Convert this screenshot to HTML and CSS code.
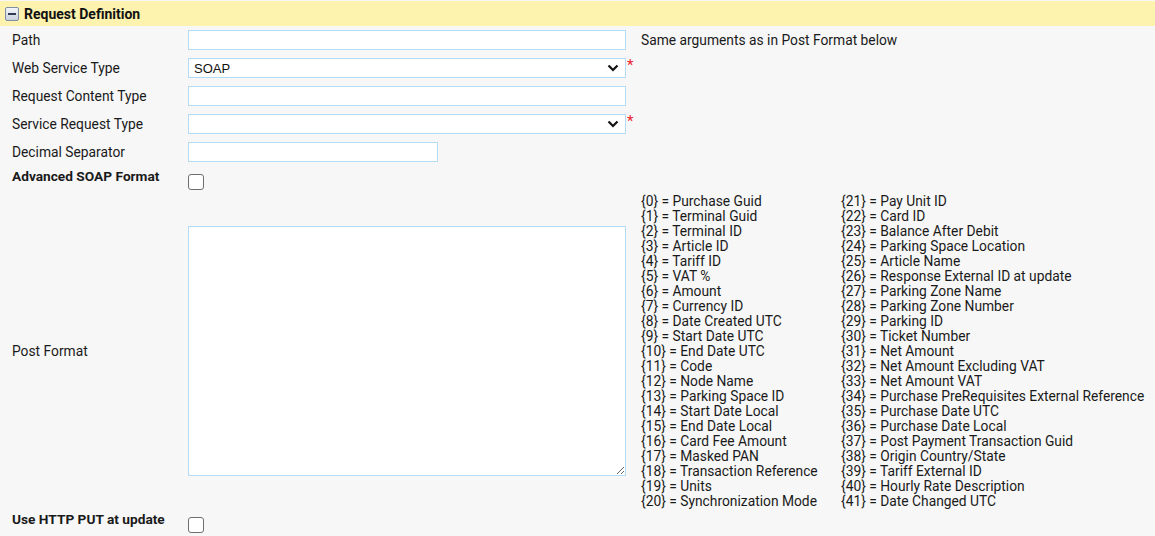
FILE: index.html
```html
<!DOCTYPE html>
<html lang="en">

<head>
  <meta charset="UTF-8" />
  <title>Request Definition</title>
  <link rel="stylesheet" href="styles.css">
</head>

<body>
  <div class="section-head">
    <span class="toggle"><span class="toggle-bar"></span></span>
    <span class="section-title">Request Definition</span>
  </div>

  <div class="form">
    <div class="lbl">Path</div>
    <div class="fld"><input type="text" class="txt" /></div>
    <div class="hint">Same arguments as in Post Format below</div>

    <div class="lbl">Web Service Type</div>
    <div class="fld">
      <span class="sel-wrap">
        <select class="sel">
          <option>SOAP</option>
        </select>
        <svg class="sel-arrow" width="12" height="8" viewBox="0 0 12 8">
          <path d="M1.5 1.5 L6 6 L10.5 1.5" fill="none" stroke="#111" stroke-width="2.2" />
        </svg>
      </span><span class="req">*</span>
    </div>
    <div></div>

    <div class="lbl">Request Content Type</div>
    <div class="fld"><input type="text" class="txt" /></div>
    <div></div>

    <div class="lbl">Service Request Type</div>
    <div class="fld">
      <span class="sel-wrap">
        <select class="sel">
          <option></option>
        </select>
        <svg class="sel-arrow" width="12" height="8" viewBox="0 0 12 8">
          <path d="M1.5 1.5 L6 6 L10.5 1.5" fill="none" stroke="#111" stroke-width="2.2" />
        </svg>
      </span><span class="req">*</span>
    </div>
    <div></div>

    <div class="lbl">Decimal Separator</div>
    <div class="fld"><input type="text" class="txt short" /></div>
    <div></div>

    <div class="lbl bold top">Advanced SOAP Format</div>
    <div class="fld chk-cell"><input type="checkbox" class="chk" /></div>
    <div></div>

    <div class="lbl">Post Format</div>
    <div class="fld area-cell"><textarea class="area"></textarea></div>
    <div class="legend">
      <div class="legend-col">
        <div>{0} = Purchase Guid</div>
        <div>{1} = Terminal Guid</div>
        <div>{2} = Terminal ID</div>
        <div>{3} = Article ID</div>
        <div>{4} = Tariff ID</div>
        <div>{5} = VAT %</div>
        <div>{6} = Amount</div>
        <div>{7} = Currency ID</div>
        <div>{8} = Date Created UTC</div>
        <div>{9} = Start Date UTC</div>
        <div>{10} = End Date UTC</div>
        <div>{11} = Code</div>
        <div>{12} = Node Name</div>
        <div>{13} = Parking Space ID</div>
        <div>{14} = Start Date Local</div>
        <div>{15} = End Date Local</div>
        <div>{16} = Card Fee Amount</div>
        <div>{17} = Masked PAN</div>
        <div>{18} = Transaction Reference</div>
        <div>{19} = Units</div>
        <div>{20} = Synchronization Mode</div>
      </div>
      <div class="legend-col">
        <div>{21} = Pay Unit ID</div>
        <div>{22} = Card ID</div>
        <div>{23} = Balance After Debit</div>
        <div>{24} = Parking Space Location</div>
        <div>{25} = Article Name</div>
        <div>{26} = Response External ID at update</div>
        <div>{27} = Parking Zone Name</div>
        <div>{28} = Parking Zone Number</div>
        <div>{29} = Parking ID</div>
        <div>{30} = Ticket Number</div>
        <div>{31} = Net Amount</div>
        <div>{32} = Net Amount Excluding VAT</div>
        <div>{33} = Net Amount VAT</div>
        <div>{34} = Purchase PreRequisites External Reference</div>
        <div>{35} = Purchase Date UTC</div>
        <div>{36} = Purchase Date Local</div>
        <div>{37} = Post Payment Transaction Guid</div>
        <div>{38} = Origin Country/State</div>
        <div>{39} = Tariff External ID</div>
        <div>{40} = Hourly Rate Description</div>
        <div>{41} = Date Changed UTC</div>
      </div>
    </div>

    <div class="lbl bold top">Use HTTP PUT at update</div>
    <div class="fld chk-cell"><input type="checkbox" class="chk" /></div>
    <div></div>
  </div>
</body>

</html>
```

FILE: styles.css
```css
* {
  margin: 0;
  padding: 0;
  box-sizing: border-box;
}

html,
body {
  width: 100%;
  height: 100%;
}

body {
  background: #f7f7f7;
  font-family: Roboto, "Liberation Sans", sans-serif;
  font-size: 13.8px;
  color: #1a1a1a;
  overflow: hidden;
  padding-top: 1px;
}

.section-head {
  display: flex;
  align-items: center;
  height: 25px;
  background: #fdf2ae;
  padding-left: 5px;
  padding-top: 1px;
}

.toggle {
  display: flex;
  align-items: center;
  justify-content: center;
  width: 14px;
  height: 14px;
  border: 1px solid #7f8ea5;
  border-radius: 2px;
  background: linear-gradient(#f4f6fa, #c9d1de);
  margin-right: 5px;
}

.toggle-bar {
  width: 8px;
  height: 2px;
  background: #2f3b52;
}

.section-title {
  font-weight: bold;
  font-size: 14px;
  color: #111;
}

.form {
  display: grid;
  grid-template-columns: 188px 453px 1fr;
  grid-auto-rows: minmax(28px, auto);
}

.lbl {
  padding-left: 12px;
  padding-bottom: 1px;
  display: flex;
  align-items: center;
}

.lbl.bold {
  font-weight: bold;
  font-size: 13.7px;
}

.lbl.top {
  align-items: flex-start;
  padding-top: 2px;
}

.fld {
  display: flex;
  align-items: center;
}

.hint {
  display: flex;
  align-items: center;
  padding-bottom: 1px;
}

.txt,
.sel {
  width: 438px;
  height: 20px;
  border: 1px solid #b3dbf6;
  background: #fff;
  font-family: "Liberation Sans", Arial, sans-serif;
  font-size: 13px;
  outline: none;
}

.sel-wrap {
  position: relative;
  display: flex;
}

.sel {
  appearance: none;
  padding-left: 5px;
  color: #111;
}

.sel-arrow {
  position: absolute;
  right: 7px;
  top: 6px;
  pointer-events: none;
}

.txt.short {
  width: 250px;
}

.req {
  color: #e8242b;
  font-size: 15px;
  align-self: flex-start;
  margin-top: 2px;
  margin-left: 1px;
}

.chk-cell {
  align-items: flex-start;
  padding-top: 8px;
}

.chk {
  appearance: none;
  width: 16px;
  height: 16px;
  border: 1px solid #6f6f6f;
  border-radius: 3px;
  background: #fff;
}

.area-cell {
  align-items: flex-start;
  padding-top: 32px;
}

.area {
  width: 438px;
  height: 250px;
  border: 1px solid #b3dbf6;
  background: #fff;
  resize: both;
}

.legend {
  display: flex;
  line-height: 15px;
  color: #1a1a1a;
}

.legend-col {
  width: 200px;
  white-space: nowrap;
}
```
